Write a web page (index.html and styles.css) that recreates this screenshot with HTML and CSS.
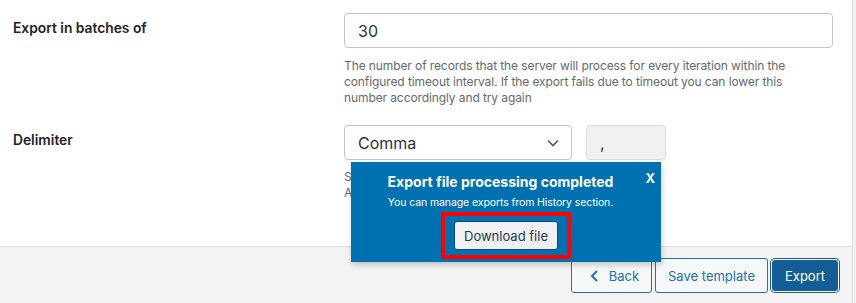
FILE: index.html
```html
<!DOCTYPE html>
<html lang="en">
<head>
    <meta charset="UTF-8">
    <meta name="viewport" content="width=device-width, initial-scale=1.0">
    <title>Export settings</title>
    <link rel="stylesheet" href="styles.css">
</head>
<body>
    <div class="panel">
        <div class="form">
            <div class="row">
                <div class="label">Export in batches of</div>
                <div class="field">
                    <input class="text-input" type="text" value="30">
                    <p class="desc">The number of records that the server will process for every iteration within the configured timeout interval. If the export fails due to timeout you can lower this number accordingly and try again</p>
                </div>
            </div>
            <div class="row">
                <div class="label">Delimiter</div>
                <div class="field">
                    <div class="inline">
                        <div class="select">
                            <span>Comma</span>
                            <svg width="12" height="8" viewBox="0 0 12 8"><path d="M1 1.5l5 5 5-5" fill="none" stroke="#50575e" stroke-width="1.6"/></svg>
                        </div>
                        <input class="small-input" type="text" value="," disabled>
                    </div>
                    <p class="desc short">Separator for columns in the export file.<br>Assumes comma by default.</p>
                </div>
            </div>
        </div>

        <div class="footer">
            <button class="btn">
                <svg width="9" height="12" viewBox="0 0 9 12"><path d="M7 1L2 6l5 5" fill="none" stroke="#2271b1" stroke-width="2"/></svg>
                Back
            </button>
            <button class="btn">Save template</button>
            <button class="btn primary">Export</button>
        </div>

        <!-- notice shown over the form when the export is done -->
        <div class="popup">
            <span class="close">X</span>
            <div class="popup-title">Export file processing completed</div>
            <div class="popup-sub">You can manage exports from History section.</div>
            <div class="highlight">
                <button class="download">Download file</button>
            </div>
        </div>
    </div>
</body>
</html>
```

FILE: styles.css
```css
/* Basic styling */
body {
    margin: 0;
    background-color: #f0f0f1;
    font-family: Inter, "Liberation Sans", sans-serif;
    color: #1d2327;
}

.panel {
    position: relative;
    width: 852px;
    height: 303px;
    background-color: #fff;
    border-right: 1px solid #dcdcde;
    display: flex;
    flex-direction: column;
}

.form {
    flex: 1;
    padding: 13px 0 0 13px;
}

.row {
    display: grid;
    grid-template-columns: 331px 1fr;
    margin-bottom: 19px;
}

.label {
    font-size: 13.8px;
    font-weight: 600;
    line-height: 20px;
    padding-top: 5px;
}

.field {
    padding-right: 20px;
}

.text-input {
    box-sizing: border-box;
    width: 489px;
    height: 35px;
    padding: 0 13px;
    border: 1px solid #c3c4c7;
    border-radius: 4px;
    font-family: inherit;
    font-size: 16px;
    color: #2c3338;
}

.desc {
    margin: 10px 0 0;
    font-size: 12px;
    letter-spacing: -0.1px;
    line-height: 16px;
    color: #646970;
    max-width: 455px;
}

.desc.short {
    margin-top: 9px;
    max-width: 320px;
}

.inline {
    display: flex;
    gap: 14px;
}

.select {
    box-sizing: border-box;
    width: 228px;
    height: 35px;
    padding: 0 12px 0 13px;
    border: 1px solid #c3c4c7;
    border-radius: 4px;
    display: flex;
    align-items: center;
    justify-content: space-between;
    font-size: 16px;
    color: #2c3338;
}

.small-input {
    box-sizing: border-box;
    width: 80px;
    height: 35px;
    padding: 0 13px;
    border: 1px solid #dcdcde;
    border-radius: 4px;
    background-color: #f0f0f1;
    font-family: inherit;
    font-size: 16px;
    color: #2c3338;
}

.footer {
    box-sizing: border-box;
    height: 57px;
    border-top: 1px solid #dcdcde;
    background-color: #f3f3f4;
    display: flex;
    justify-content: flex-end;
    align-items: flex-start;
    gap: 3px;
    padding: 11px 12px 0 0;
}

.btn {
    height: 35px;
    padding: 0 12px;
    border: 1px solid #2271b1;
    border-radius: 3px;
    background-color: #f6f7f7;
    color: #2271b1;
    font-family: inherit;
    font-size: 13px;
    display: flex;
    align-items: center;
    gap: 10px;
}

.btn svg {
    margin-left: 6px;
}

.btn.primary {
    height: 31px;
    margin: 2px 2px 0 1px;
    padding: 0 12px;
    background-color: #135e96;
    border-color: #135e96;
    color: #fff;
    box-shadow: 0 0 0 1px #fff, 0 0 0 2px #135e96;
}

.popup {
    position: absolute;
    left: 351px;
    top: 162px;
    width: 310px;
    height: 100px;
    box-sizing: border-box;
    padding: 10px 21px 0 10px;
    background-color: #0071b0;
    color: #fff;
    text-align: center;
    box-shadow: 1px 3px 6px rgba(0, 0, 0, 0.2);
}

.close {
    position: absolute;
    right: 6px;
    top: 8px;
    font-size: 13px;
    font-weight: 700;
}

.popup-title {
    font-size: 14px;
    font-weight: 700;
    line-height: 20px;
}

.popup-sub {
    font-size: 10.5px;
    letter-spacing: -0.1px;
    line-height: 14px;
    margin-top: 4px;
}

.highlight {
    width: fit-content;
    margin: 2px 0 0 80px;
    padding: 5px 9px;
    border: 4px solid #f00;
}

.download {
    display: block;
    width: 104px;
    height: 29px;
    border: 1px solid #0a4b78;
    border-radius: 3px;
    background-color: #f0f0f1;
    color: #1d3a55;
    font-family: inherit;
    font-size: 13px;
}
```
